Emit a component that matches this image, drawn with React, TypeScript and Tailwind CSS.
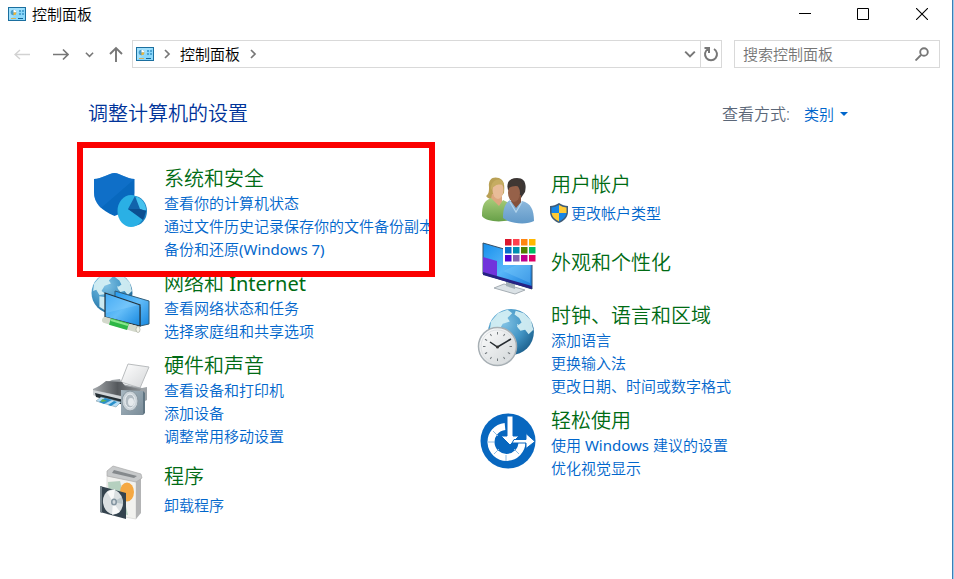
import type { ReactNode } from 'react';

type Category = {
  title: string;
  links: string[];
  icon: ReactNode;
  shielded?: boolean;
  marked?: boolean;
};

const iconClass = 'mt-1 h-[60px] w-[60px] shrink-0 overflow-visible';

function PanelIcon() {
  return (
    <svg className="h-[14px] w-[18px] shrink-0" viewBox="0 0 18 14" aria-hidden="true">
      <rect x=".5" y=".5" width="17" height="13" fill="#8bd8fb" stroke="#1b6f9f" />
      <path d="M1 13V1h16z" fill="#b5e8fd" opacity=".5" />
      <circle cx="5.500" cy="5.500" r="2.8" fill="#4a9dcc" />
      <path d="M5.500 5.500V2.700a2.800 2.800 0 0 1 2.800 2.800z" fill="#fff" />
      <path d="M5.500 5.500h2.800a2.800 2.800 0 0 1-2.800 2.800z" fill="#f2b632" />
      <path d="M11 3h2v2h-2zM14 3h2v2h-2zM11 6h2v2h-2zM14 6h2v2h-2z" fill="#4da4d3" />
      <path d="M3 11.500h5" stroke="#d5b158" />
      <path d="M10 11.500h5" stroke="#126799" />
    </svg>
  );
}

function Chevron({ down = false, className = '' }: { down?: boolean; className?: string }) {
  return (
    <svg className={`shrink-0 ${className}`} viewBox="0 0 10 10" fill="none" stroke="#777" strokeWidth="1.7" aria-hidden="true">
      <path d={down ? 'M1 3l4 4 4-4' : 'M3 1l4 4-4 4'} />
    </svg>
  );
}

function SecurityIcon() {
  return (
    <svg className={iconClass} viewBox="0 0 60 60" aria-hidden="true">
      <path d="M2 9C10 9 17 3 22.500 3s12 6 20 6v14c0 12-8 19-20 23C9 40 2 33 2 22z" fill="#0868be" />
      <path d="M2 9C10 9 17 3 22.500 3s12 6 20 6L9 38C4 33 2 28 2 22z" fill="#1474cf" opacity=".6" />
      <ellipse cx="42" cy="41" rx="13" ry="15" fill="#1d83c2" />
      <ellipse cx="39" cy="41" rx="13.500" ry="16" fill="#2ab0e5" />
      <path d="M39 41l6-14c6 2 9 8 9 13z" fill="#46c2ee" />
      <path d="M36 39l7-13 5 13 6 2-2 8z" fill="#1163ab" />
      <path d="M36 39l12 0 6 2-3 9z" fill="#0b4f91" />
    </svg>
  );
}

function Globe({ x, y, r }: { x: number; y: number; r: number }) {
  return (
    <svg x={x - r} y={y - r} width={r * 2} height={r * 2} viewBox="0 0 40 40">
      <defs>
        <radialGradient id="sea" cx=".35" cy=".3" r=".8">
          <stop offset="0" stopColor="#82c3e5" />
          <stop offset=".55" stopColor="#4194c4" />
          <stop offset="1" stopColor="#195b88" />
        </radialGradient>
      </defs>
      <circle cx="20" cy="20" r="19.500" fill="url(#sea)" />
      <path d="M3 11l6-7 8-3 4 3-4 4 2 3-6 2-3 5 4 3-6 1-3-5-3 1zM24 2l7 2 6 6 2 8-4 4-3-4-4 1-3-4 4-3-2-4-4-3zM8 23l6 1 4 5-4 8-6-4zM25 13l3 2-2 2z" fill="#d6f0f4" opacity=".93" />
    </svg>
  );
}

function NetworkIcon() {
  return (
    <svg className={iconClass} viewBox="0 0 60 60" aria-hidden="true">
      <defs>
        <linearGradient id="screen" x1="0" y1="0" x2="1" y2="1">
          <stop offset="0" stopColor="#249af0" /><stop offset=".5" stopColor="#64bdf8" /><stop offset="1" stopColor="#1687df" />
        </linearGradient>
      </defs>
      <Globe x={20} y={18} r={21} />
      <path d="M23 16l34 10v23l-9 2V32L23 24z" fill="url(#screen)" stroke="#315c78" />
      <path d="M13 18l35 12v21L13 42z" fill="url(#screen)" stroke="#24343f" strokeWidth="1.200" />
      <path d="M14 19l33 11-33 8z" fill="#9bd9ff" opacity=".28" />
      <path d="M13 45l31 9" stroke="#d3d8cb" strokeWidth="6" strokeLinecap="round" />
      <path d="M18 46.500l18 5.200" stroke="#2eb746" strokeWidth="7" />
      <path d="M19 45l17 5" stroke="#8ae68b" strokeWidth="2" />
      <ellipse cx="46" cy="54.500" rx="2" ry="3" fill="#f3f3e9" stroke="#9aa091" strokeWidth=".6" />
    </svg>
  );
}

function PrinterIcon() {
  return (
    <svg className={iconClass} viewBox="0 0 60 60" aria-hidden="true">
      <defs>
        <linearGradient id="printer" x1="0" y1="0" x2="1" y2="0"><stop stopColor="#a3a7aa" /><stop offset=".5" stopColor="#54585c" /><stop offset="1" stopColor="#8d9194" /></linearGradient>
        <linearGradient id="speaker" x1="0" y1="0" x2="1" y2="1"><stop stopColor="#a8b8c2" /><stop offset="1" stopColor="#7a8c98" /></linearGradient>
        <linearGradient id="sheet" x1="0" y1="0" x2="1" y2="1"><stop stopColor="#fff" /><stop offset="1" stopColor="#d4d6d8" /></linearGradient>
      </defs>
      <path d="M29 25l7-18 21 3-9 21z" fill="url(#sheet)" stroke="#b9bcbe" />
      <path d="M20 23l8-1 2 5 20 4 5-1v13l-8 4L1 38v-6z" fill="#9ea3a7" />
      <path d="M14 24l16 1 3 4 16 3-6 10L2 33z" fill="url(#printer)" />
      <path d="M1 33l31 7v5L1 38z" fill="#d0d4d7" />
      <path d="M3 36l29 7v5L4 40z" fill="#252f35" />
      <path d="M9 40l20 5-5 5-20-6z" fill="#b6ddf5" stroke="#77909b" strokeWidth=".5" />
      <path d="M13 41l7 2-8 4-5-2zM25 45l-6 4-3-1 6-4z" fill="#288fca" />
      <path d="M10 42l5 2-6 1z" fill="#66b550" />
      <path d="M29 33l22 1v24l-22 0z" fill="url(#speaker)" />
      <path d="M51 34l2 2v20l-2 2z" fill="#607582" />
      <ellipse cx="38" cy="44" rx="8" ry="10" fill="#c9d2d8" stroke="#8a98a1" />
      <ellipse cx="38" cy="44" rx="5" ry="7" fill="#b2bcc3" stroke="#edf1f4" />
      <ellipse cx="39" cy="45" rx="3" ry="4" fill="#e5eaed" />
    </svg>
  );
}

function ProgramsIcon() {
  return (
    <svg className={iconClass} viewBox="0 0 60 60" aria-hidden="true">
      <path d="M15 14l29 5v38l-29-5z" fill="#f2f2ef" stroke="#d6d6d4" strokeWidth=".7" />
      <path d="M44 19l5-5v37l-5 6z" fill="#b3b4b5" />
      <path d="M15 9l6-5 28 8 1 4-6 4-29-6z" fill="#c8cacb" stroke="#aaa" strokeWidth=".7" />
      <path d="M20 11l2-3 23 6-3 2z" fill="#85898c" />
      <path d="M16 20l12-1 8 34-18-3z" fill="#b5d0bf" />
      <ellipse cx="35" cy="30" rx="7" ry="9.500" fill="#f5a842" />
      <path d="M8 24l26 7v26L8 50z" fill="#34434e" />
      <path d="M8 24l2 0v27l-2-1z" fill="#76838b" />
      <ellipse cx="21" cy="40" rx="10" ry="12.500" fill="#dbe0e2" transform="rotate(-9 21 40)" />
      <path d="M21 40l-6-10 8-3zM21 40l7 10-8 3z" fill="#fff" opacity=".8" />
      <path d="M21 40l9-5 1 7z" fill="#aebcc2" opacity=".7" />
      <ellipse cx="22" cy="40" rx="3" ry="3.500" fill="#8394a0" />
      <ellipse cx="22" cy="40" rx="1.500" ry="2" fill="#d2d9dd" />
    </svg>
  );
}

function UsersIcon() {
  return (
    <svg className={iconClass} viewBox="0 0 60 60" aria-hidden="true">
      <defs>
        <linearGradient id="green" x1="0" y1="0" x2="0" y2="1"><stop stopColor="#a9cd7b" /><stop offset="1" stopColor="#67a048" /></linearGradient>
        <linearGradient id="blue" x1="0" y1="0" x2="0" y2="1"><stop stopColor="#8fbade" /><stop offset="1" stopColor="#6199c8" /></linearGradient>
      </defs>
      <path d="M10 17C9 9 14 6 20 8c5 2 6 7 5 15l-5 6c-5 1-10 1-13-3 3-2 3-5 3-9z" fill="#b9a055" />
      <path d="M13 24h10v8l4 4-6 9-10-11z" fill="#dda77f" />
      <path d="M3 46c0-11 2-15 9-18l8 8 4-6 6 3v17c-10 3-24 1-27-4z" fill="url(#green)" />
      <ellipse cx="19" cy="20" rx="5.500" ry="9" fill="#e8bc98" />
      <path d="M12 20c-1-12 12-14 13-5-5-1-9-1-13 5z" fill="#c6ac61" />
      <path d="M29 20c-2-8 2-12 9-12s10 5 8 14l-4 6z" fill="#3b3635" />
      <path d="M33 26l9-1v9l-4 7-6-9z" fill="#84513b" />
      <path d="M24 48c0-9 2-15 7-18l6 8 6-7c9 2 12 9 12 20-7 4-24 3-31-3z" fill="url(#blue)" />
      <ellipse cx="35" cy="23" rx="6" ry="9" fill="#966149" />
      <path d="M29 18c-1-8 4-10 10-8 4 1 6 5 4 14l-2-7c-4-2-7-1-12 1z" fill="#403733" />
      <path d="M31 32l6 10 6-10" fill="none" stroke="#b4d5ec" strokeWidth="1.200" />
    </svg>
  );
}

function AppearanceIcon() {
  const colors = ['#db162c', '#ff414d', '#ff8510', '#ffb800', '#0870c9', '#008fb0', '#518000', '#00bd63', '#5104cf', '#8363b0', '#bd008e', '#de0064'];
  return (
    <svg className="h-[53px] w-[60px] shrink-0 overflow-visible" viewBox="0 0 60 53" aria-hidden="true">
      <defs><linearGradient id="desktop" x1="0" y1="0" x2="1" y2="1"><stop stopColor="#168fec" /><stop offset=".5" stopColor="#58b7f9" /><stop offset="1" stopColor="#1578d8" /></linearGradient></defs>
      <path d="M15 48l10-4 21 6-10 4z" fill="#dbe2e6" stroke="#a5adb3" />
      <path d="M27 39l9 3v7l-9-3z" fill="#a2aeb7" />
      <path d="M4 3l49 14v32L4 34z" fill="url(#desktop)" stroke="#344f67" />
      <path d="M4 17l14 4v16L4 33z" fill="#7134db" />
      <path d="M4 32l49 14v3L4 35z" fill="#262184" />
      <path d="M24 31l27-12v24z" fill="#7fcafa" opacity=".35" />
      <path d="M24-3h35v28H24z" fill="#fff" />
      {colors.map((color, i) => (
        <rect key={color} x={26 + (i % 4) * 8} y={Math.floor(i / 4) * 8 - 1} width="6.500" height="6.500" fill={color} />
      ))}
    </svg>
  );
}

function ClockIcon() {
  return (
    <svg className={iconClass} viewBox="0 0 60 60" aria-hidden="true">
      <defs><linearGradient id="clock" x1="0" y1="0" x2="1" y2="1"><stop stopColor="#fff" /><stop offset="1" stopColor="#cfd4d6" /></linearGradient></defs>
      <Globe x={32} y={25} r={23.5} />
      <circle cx="18.500" cy="39.500" r="19" fill="url(#clock)" stroke="#a7afb4" strokeWidth="1.500" />
      <circle cx="18.500" cy="39.500" r="16.500" fill="none" stroke="#dfe2e4" />
      {Array.from({ length: 12 }, (_, i) => (
        <path key={i} d="M18.500 25v2.500" transform={`rotate(${i * 30} 18.5 39.5)`} stroke="#72797d" />
      ))}
      <path d="M11 35l7.500 5L32 32" fill="none" stroke="#252b30" strokeWidth="1.500" />
      <circle cx="18.500" cy="40" r="1.500" fill="#333" />
    </svg>
  );
}

function EaseIcon() {
  return (
    <svg className={iconClass} viewBox="0 0 60 60" aria-hidden="true">
      <circle cx="29" cy="29" r="27.500" fill="#0867bf" />
      <path d="M26 14.500A15.500 15.500 0 1 0 43 30" fill="none" stroke="#fff" strokeWidth="7" />
      <path d="M8 30h7M15 42l5-5M27 49v-6M40 42l-5-5M14 19l5 5" stroke="#8fbce2" />
      <path d="M28 4h6v20h6l-9 9-9-9h6z" fill="#fff" stroke="#0867bf" />
      <path d="M35 27.500h12v-6l9 8-9 7v-5.500H33z" fill="#fff" stroke="#0867bf" />
    </svg>
  );
}

function Shield() {
  return (
    <svg className="-ml-0.5 mr-0.5 h-5 w-5 shrink-0" viewBox="0 0 20 20" aria-hidden="true">
      <path d="M10 0C7 2 4 3 1 3v6c0 5 4 9 9 11 5-2 9-6 9-11V3c-3 0-6-1-9-3z" fill="#3f5c78" />
      <path d="M10 2Q6 4 2.500 4.500V10H10z" fill="#1786e6" />
      <path d="M10 2q3.500 2 7.500 2.500V10H10z" fill="#ffcb35" />
      <path d="M2.500 10H10v8.500Q3.500 15.500 2.500 10z" fill="#ffcb35" />
      <path d="M10 10h7.500Q16.500 15.500 10 18.500z" fill="#1786e6" />
    </svg>
  );
}

const leftCategories: Category[] = [
  { title: '系统和安全', links: ['查看你的计算机状态', '通过文件历史记录保存你的文件备份副本', '备份和还原(Windows 7)'], icon: <SecurityIcon />, marked: true },
  { title: '网络和 Internet', links: ['查看网络状态和任务', '选择家庭组和共享选项'], icon: <NetworkIcon /> },
  { title: '硬件和声音', links: ['查看设备和打印机', '添加设备', '调整常用移动设置'], icon: <PrinterIcon /> },
  { title: '程序', links: ['卸载程序'], icon: <ProgramsIcon /> },
];

const rightCategories: Category[] = [
  { title: '用户帐户', links: ['更改帐户类型'], icon: <UsersIcon />, shielded: true },
  { title: '外观和个性化', links: [], icon: <AppearanceIcon /> },
  { title: '时钟、语言和区域', links: ['添加语言', '更换输入法', '更改日期、时间或数字格式'], icon: <ClockIcon /> },
  { title: '轻松使用', links: ['使用 Windows 建议的设置', '优化视觉显示'], icon: <EaseIcon /> },
];

// Latin words take the regular weight, beside the lighter Chinese glyphs.
function MixedText({ text }: { text: string }) {
  return text.split(/([ -~]+)/).map((part, i) =>
    i % 2 === 1 ? <span key={i} className="font-normal">{part}</span> : part,
  );
}

function CategoryItem({ title, links, icon, shielded, marked }: Category) {
  return (
    <section className="relative flex gap-3">
      {icon}
      <div className={`flex flex-col justify-center whitespace-nowrap ${links.length === 1 ? 'gap-1' : ''} ${links.length === 0 ? 'pb-2' : ''}`}>
        <h2 className="text-xl font-[350] leading-[26px] text-[#006b14]">
          <a href="#" className="hover:underline"><MixedText text={title} /></a>
        </h2>
        {links.length > 0 && (
          <ul>
            {links.map((link) => (
              <li key={link} className="flex h-[23px] items-center">
                {shielded && <Shield />}
                <a href="#" className="text-[15px] leading-[23px] text-[#0066cc] hover:underline"><MixedText text={link} /></a>
              </li>
            ))}
          </ul>
        )}
      </div>
      {marked && <div className="pointer-events-none absolute -left-[15px] -top-6 z-10 h-[135px] w-[358px] border-6 border-[#fb0000]" />}
    </section>
  );
}

export default function App() {
  return (
    <div className="min-h-screen bg-[#9dcbed] pr-px font-['Noto_Sans','Noto_Sans_CJK_SC',sans-serif] text-[15px] font-[350]">
      <div className="min-h-screen border-r border-[#3a7fb5] bg-white">
        <header className="flex h-7 items-center justify-between pl-2">
          <div className="flex items-center gap-1.5">
            <PanelIcon />
            <h1 className="font-[350] leading-7 text-black">控制面板</h1>
          </div>
          <div className="flex">
            <button type="button" aria-label="最小化" className="flex h-7 w-[58px] items-center justify-center">
              <svg className="h-3 w-3" viewBox="0 0 12 12"><path d="M0 5.500h12" stroke="#000" /></svg>
            </button>
            <button type="button" aria-label="最大化" className="flex h-7 w-[58px] items-center justify-center">
              <svg className="h-3 w-3" viewBox="0 0 12 12"><path d="M.5.5h11v11H.5z" fill="none" stroke="#000" /></svg>
            </button>
            <button type="button" aria-label="关闭" className="flex h-7 w-[60px] items-center justify-center">
              <svg className="h-3 w-3" viewBox="0 0 12 12"><path d="M0 0l12 12M12 0L0 12" stroke="#000" strokeWidth="1.100" /></svg>
            </button>
          </div>
        </header>

        <nav className="mt-3 flex h-7 items-center gap-2 pl-3.5 pr-3" aria-label="导航">
          <div className="flex w-[110px] shrink-0 items-center justify-between">
            <button type="button" aria-label="后退" disabled>
              <svg className="h-4 w-4" viewBox="0 0 16 16" fill="none" stroke="#d2d2d2" strokeWidth="1.400"><path d="M16 8.500H1M6 4L1 8.500 6 13" /></svg>
            </button>
            <div className="flex items-center gap-4 pl-2">
              <button type="button" aria-label="前进">
                <svg className="h-4 w-4" viewBox="0 0 16 16" fill="none" stroke="#777" strokeWidth="1.700"><path d="M0 8.500h15M10 3.500l5 5-5 5" /></svg>
              </button>
              <button type="button" aria-label="最近位置"><Chevron down className="h-[9px] w-[9px]" /></button>
            </div>
            <button type="button" aria-label="上移">
              <svg className="h-4 w-4" viewBox="0 0 16 16" fill="none" stroke="#777" strokeWidth="1.900"><path d="M8 16V2M2 8l6-6 6 6" /></svg>
            </button>
          </div>
          <div className="mr-1 flex h-7 min-w-0 flex-1 items-center border border-[#d9d9d9]">
            <div className="flex flex-1 items-center gap-2 pl-[3px]">
              <PanelIcon />
              <Chevron className="h-[10px] w-[10px]" />
              <button type="button" className="leading-6 text-black">控制面板</button>
              <Chevron className="h-[10px] w-[10px]" />
            </div>
            <button type="button" aria-label="以前的位置" className="flex h-full w-5 items-center justify-center">
              <Chevron down className="h-3 w-3" />
            </button>
            <button type="button" aria-label="刷新" className="flex h-full w-[21px] items-center justify-center border-l border-[#d9d9d9]">
              <svg className="h-4 w-4" viewBox="0 0 16 16" fill="none" stroke="#777" strokeWidth="2"><path d="M11 3a6 6 0 1 1-6 0M1.500 2H6v5" /></svg>
            </button>
          </div>
          <label className="flex h-7 w-[206px] items-center border border-[#d9d9d9] pl-2 pr-2.5">
            <input type="text" aria-label="搜索控制面板" placeholder="搜索控制面板" className="min-w-0 flex-1 leading-6 outline-none placeholder:text-[#757575]" />
            <svg className="h-[14px] w-[14px] shrink-0" viewBox="0 0 14 14" fill="none" stroke="#777" strokeWidth="1.900" aria-hidden="true">
              <circle cx="9" cy="5" r="3.800" /><path d="M6 8l-5.500 5.500" />
            </svg>
          </label>
        </nav>

        <main className="pl-[92px] pr-[86px] pt-8">
          <div className="-ml-1 flex h-7 items-center justify-between pr-[18px]">
            <h2 className="text-xl font-[350] leading-7 text-[#003399]">调整计算机的设置</h2>
            <div className="flex items-center">
              <label htmlFor="view-mode" className="mr-3.5 text-base text-[#5b6778]">查看方式:</label>
              <select id="view-mode" defaultValue="类别" className="w-9 appearance-none text-[#0066cc] outline-none">
                <option>类别</option>
              </select>
              <svg className="h-1 w-2" viewBox="0 0 8 4" aria-hidden="true"><path d="M0 0h8L4 4z" fill="#0066cc" /></svg>
            </div>
          </div>
          <div className="mt-[38px] grid grid-cols-2">
            {[leftCategories, rightCategories].map((column) => (
              <div key={column[0].title} className="flex flex-col gap-2.5">
                {column.map((category) => <CategoryItem key={category.title} {...category} />)}
              </div>
            ))}
          </div>
        </main>
      </div>
    </div>
  );
}
